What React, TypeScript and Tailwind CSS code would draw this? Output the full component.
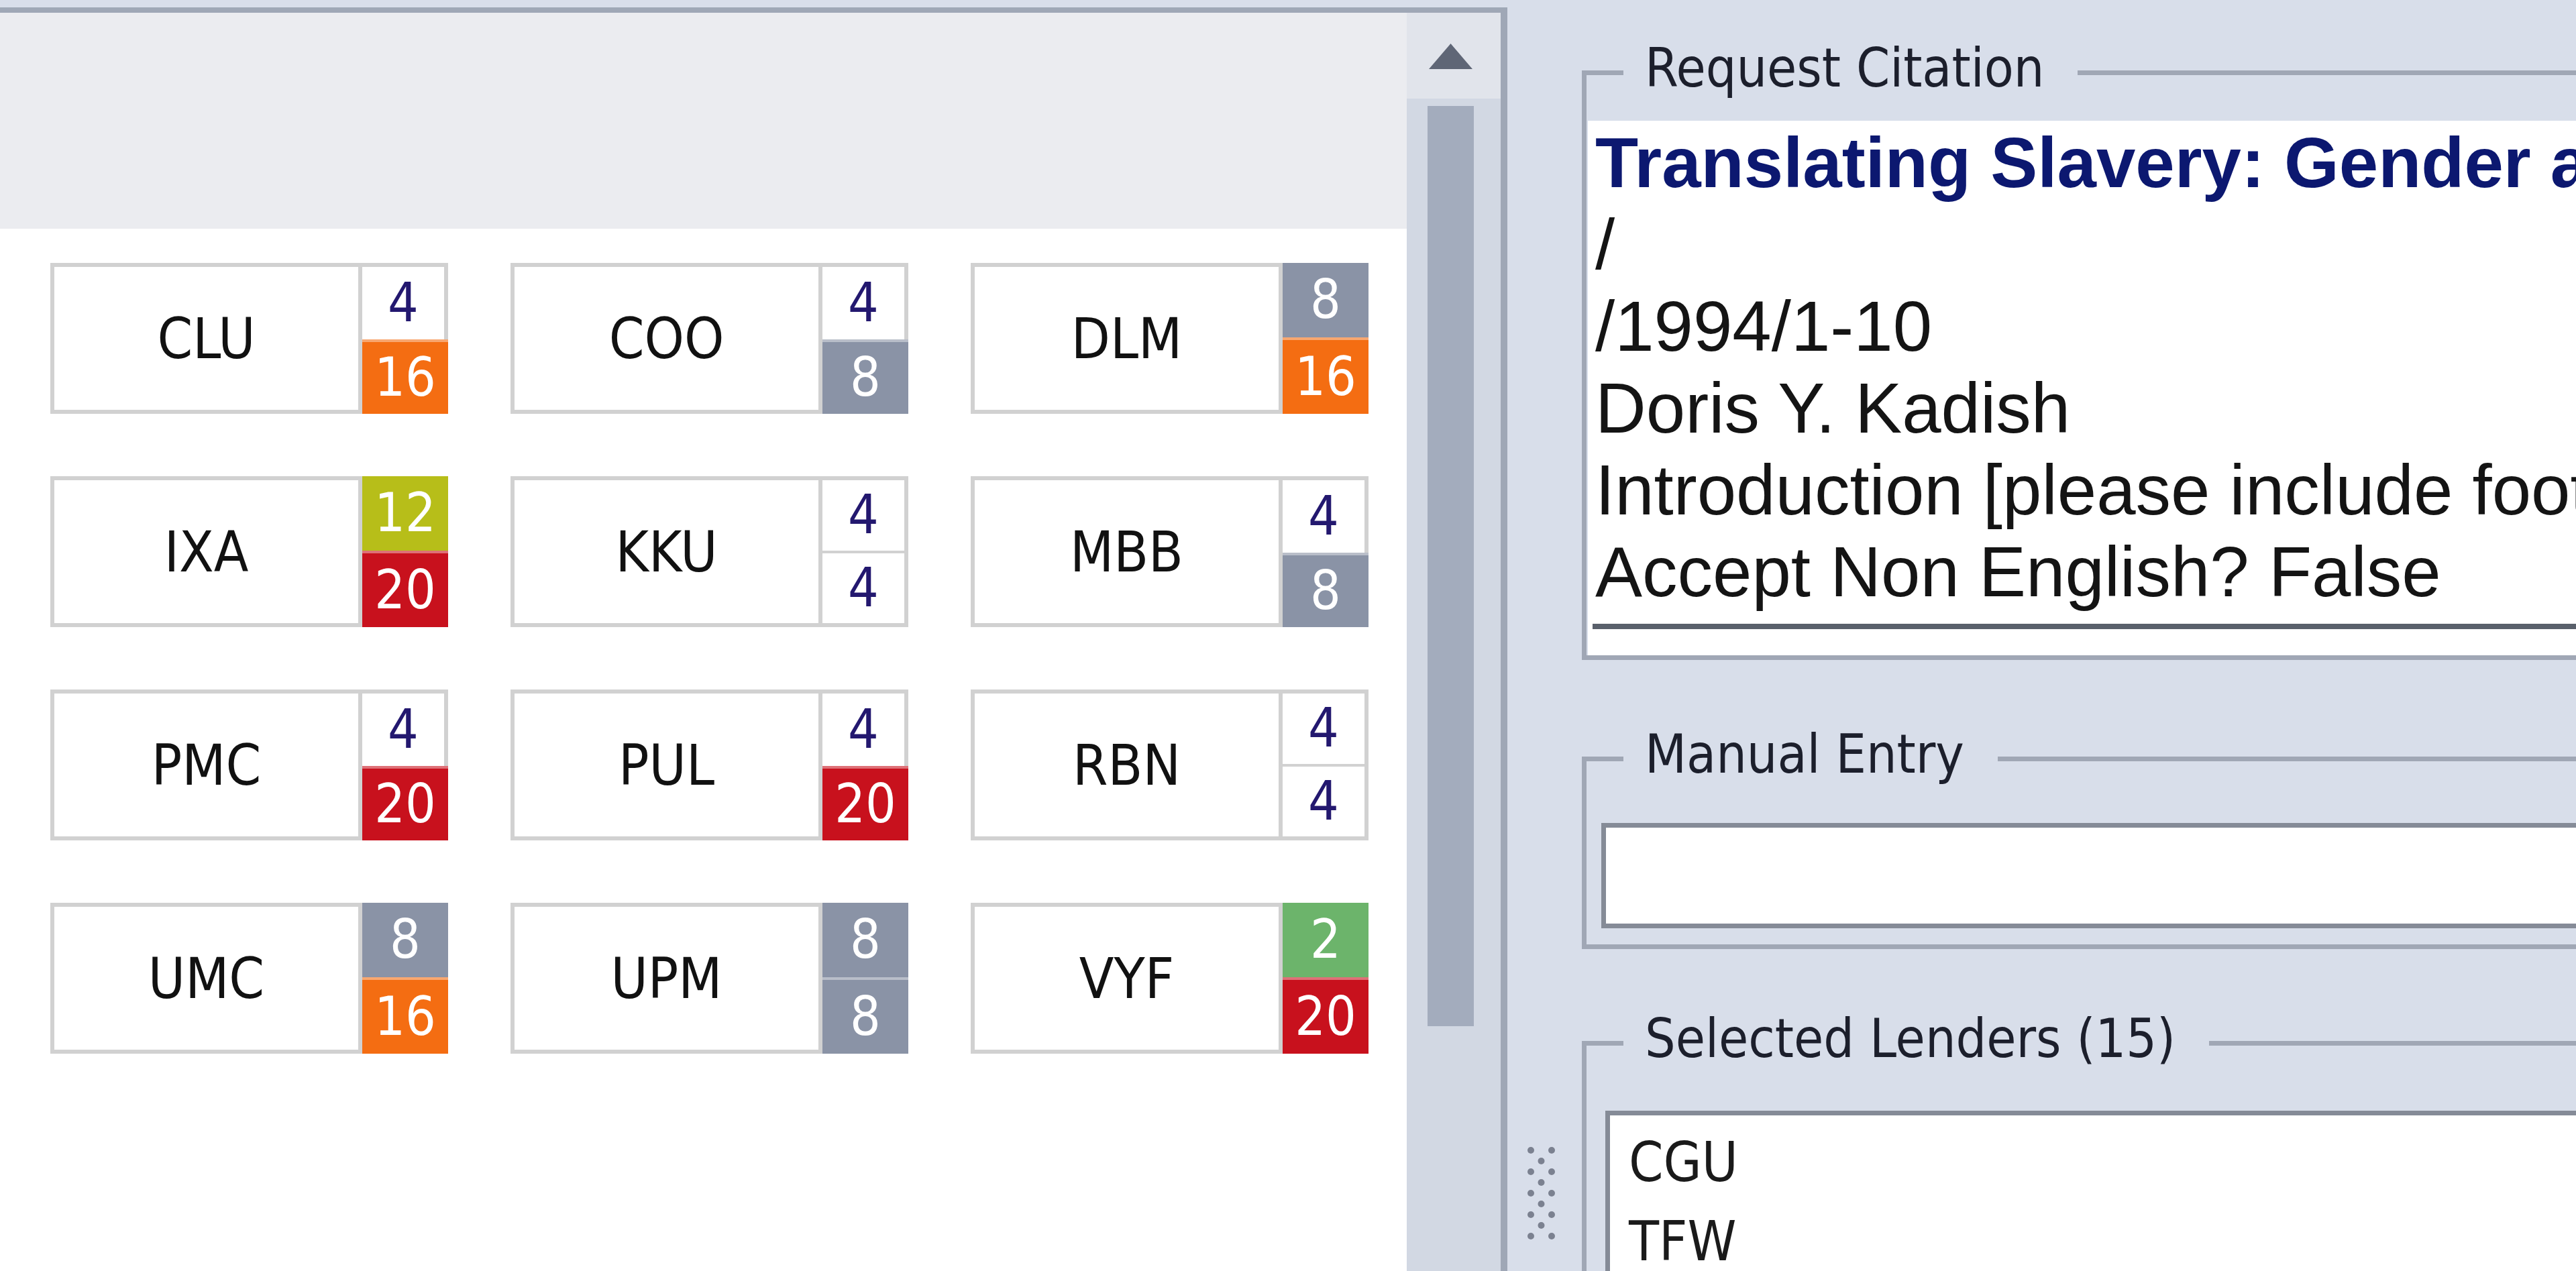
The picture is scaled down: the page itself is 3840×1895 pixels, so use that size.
const TAHOMA = "font-['DejaVu_Sans_Condensed','DejaVu_Sans',sans-serif]";
const ARIAL = "font-['Liberation_Sans',Arial,sans-serif]";

type Cell = { v: string; c?: string };
type Lender = { code: string; top: Cell; bottom: Cell };

const FILL: Record<string, string> = {
  orange: "bg-[#f46d12]",
  gray: "bg-[#8a93a6]",
  red: "bg-[#c8111d]",
  olive: "bg-[#b7be19]",
  green: "bg-[#6cb46b]",
};

const lenders: Lender[] = [
  { code: "CLU", top: { v: "4" }, bottom: { v: "16", c: "orange" } },
  { code: "COO", top: { v: "4" }, bottom: { v: "8", c: "gray" } },
  { code: "DLM", top: { v: "8", c: "gray" }, bottom: { v: "16", c: "orange" } },
  { code: "IXA", top: { v: "12", c: "olive" }, bottom: { v: "20", c: "red" } },
  { code: "KKU", top: { v: "4" }, bottom: { v: "4" } },
  { code: "MBB", top: { v: "4" }, bottom: { v: "8", c: "gray" } },
  { code: "PMC", top: { v: "4" }, bottom: { v: "20", c: "red" } },
  { code: "PUL", top: { v: "4" }, bottom: { v: "20", c: "red" } },
  { code: "RBN", top: { v: "4" }, bottom: { v: "4" } },
  { code: "UMC", top: { v: "8", c: "gray" }, bottom: { v: "16", c: "orange" } },
  { code: "UPM", top: { v: "8", c: "gray" }, bottom: { v: "8", c: "gray" } },
  { code: "VYF", top: { v: "2", c: "green" }, bottom: { v: "20", c: "red" } },
];

const citation = [
  "/",
  "/1994/1-10",
  "Doris Y. Kadish",
  "Introduction [please include footnotes]",
  "Accept Non English? False",
];

// only the first two rows fit above the fold
const selected = ["CGU", "TFW"];

function LenderCard({ lender }: { lender: Lender }) {
  const { top, bottom } = lender;
  const topCls = top.c
    ? `${FILL[top.c]} text-white`
    : "border-t-[6px] border-r-[6px] border-[#d1d1d1] bg-white text-[#23186f]";
  const bottomCls = bottom.c
    ? `${FILL[bottom.c]} border-t-[4px] border-white/40 text-white`
    : "border-t-[4px] border-r-[6px] border-b-[6px] border-[#d1d1d1] bg-white text-[#23186f]";

  return (
    <div className="flex h-[225px] w-[593px]">
      <div className="flex flex-1 items-center justify-center border-[6px] border-[#d1d1d1] bg-white text-[84px] leading-none text-[#111111]">
        {lender.code}
      </div>
      <div className="flex w-[128px] flex-col text-[80px] leading-none">
        <div className={`flex flex-1 items-center justify-center ${topCls}`}>{top.v}</div>
        <div className={`flex flex-1 items-center justify-center ${bottomCls}`}>{bottom.v}</div>
      </div>
    </div>
  );
}

function Group({
  label,
  className,
  children,
}: {
  label: string;
  className?: string;
  children: React.ReactNode;
}) {
  return (
    <fieldset className={`w-[1700px] border-[7px] border-[#a0a7b5] ${className ?? ""}`}>
      <legend className="ml-[55px] pr-[50px] pb-[12px] pl-[32px] text-[80px] leading-[92px] text-[#1c1f2c]">
        {label}
      </legend>
      {children}
    </fieldset>
  );
}

function GripDots() {
  const outer = [5, 37, 69, 101, 133];
  const middle = [21, 53, 85, 117];
  return (
    <svg width="46" height="140" viewBox="0 0 46 140">
      {outer.map((y) => (
        <g key={y} fill="#7b8190">
          <circle cx="5" cy={y} r="5" />
          <circle cx="36" cy={y} r="5" />
        </g>
      ))}
      {middle.map((y) => (
        <circle key={y} cx="20.5" cy={y} r="5" fill="#7b8190" />
      ))}
    </svg>
  );
}

export default function App() {
  return (
    <div className={`flex h-[1895px] w-[3840px] overflow-hidden bg-[#d8deea] ${TAHOMA}`}>
      {/* lender board */}
      <div className="mt-[11px] flex w-[2247px] shrink-0 border-t-[8px] border-r-[10px] border-[#9fa7b6]">
        <div className="flex w-[2097px] flex-col">
          <div className="h-[322px] bg-[#ebecf0]" />
          <div className="flex-1 bg-white pt-[51px] pl-[75px]">
            <div className="grid grid-cols-[repeat(3,593px)] gap-x-[93px] gap-y-[93px]">
              {lenders.map((l) => (
                <LenderCard key={l.code} lender={l} />
              ))}
            </div>
          </div>
        </div>

        <div className="flex w-[140px] flex-col bg-[#d2d8e3]">
          <div className="h-[128px] bg-[#e1e4eb] pt-[46px] pl-[33px]">
            <svg width="65" height="38" viewBox="0 0 65 38">
              <polygon points="32.5,0 65,38 0,38" fill="#5f6676" />
            </svg>
          </div>
          <div className="mt-[11px] ml-[31px] h-[1372px] w-[69px] bg-[#a3acbd]" />
        </div>
      </div>

      {/* request details */}
      <div className="flex flex-1">
        <div className="flex w-[111px] shrink-0 flex-col justify-end pb-[45px] pl-[30px]">
          <GripDots />
        </div>

        <div className="flex flex-1 flex-col overflow-hidden pt-[56px]">
          <Group label="Request Citation">
            <div className={`mt-[20px] ml-[2px] h-[797px] bg-white ${ARIAL}`}>
              <div className="pt-[2px] pl-[11px] text-[105px] leading-[122px] whitespace-nowrap text-[#141414]">
                <div className="font-bold text-[#0c1870]">
                  Translating Slavery: Gender and Race in French Women's Writing
                </div>
                {citation.map((line) => (
                  <div key={line}>{line}</div>
                ))}
              </div>
              <div className="mt-[16px] ml-[7px] h-[8px] bg-[#59606b]" />
            </div>
          </Group>

          <Group label="Manual Entry" className="mt-[95px] pb-[24px]">
            <div className="mt-[44px] ml-[22px] h-[157px] border-[7px] border-[#858b97] bg-white" />
          </Group>

          <Group label="Selected Lenders (15)" className="mt-[88px]">
            <div className="mt-[49px] ml-[28px] h-[400px] border-[7px] border-[#858b97] bg-white pt-[11px] pl-[28px] text-[82px] leading-[118px] text-[#1a1a1a]">
              {selected.map((s) => (
                <div key={s}>{s}</div>
              ))}
            </div>
          </Group>
        </div>
      </div>
    </div>
  );
}
